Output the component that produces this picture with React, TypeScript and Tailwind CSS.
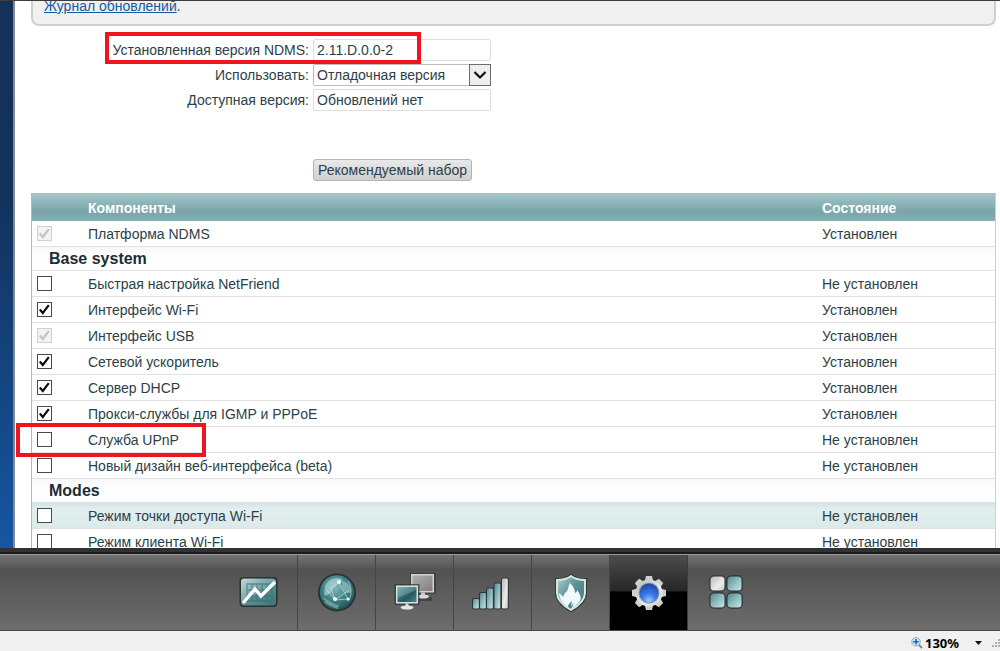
import {useState, type ReactNode} from 'react'

interface Component {
    id: string
    name: string
    installed: boolean
    locked?: boolean
    active?: boolean
    marked?: boolean
}

interface Group {
    title: string | null
    items: Component[]
}

const groups: Group[] = [
    {
        title: null,
        items: [{id: 'ndms', name: 'Платформа NDMS', installed: true, locked: true}],
    },
    {
        title: 'Base system',
        items: [
            {id: 'netfriend', name: 'Быстрая настройка NetFriend', installed: false},
            {id: 'wifi', name: 'Интерфейс Wi-Fi', installed: true},
            {id: 'usb', name: 'Интерфейс USB', installed: true, locked: true},
            {id: 'fastnat', name: 'Сетевой ускоритель', installed: true},
            {id: 'dhcp', name: 'Сервер DHCP', installed: true},
            {id: 'proxy', name: 'Прокси-службы для IGMP и PPPoE', installed: true},
            {id: 'upnp', name: 'Служба UPnP', installed: false, marked: true},
            {id: 'newui', name: 'Новый дизайн веб-интерфейса (beta)', installed: false},
        ],
    },
    {
        title: 'Modes',
        items: [
            {id: 'ap', name: 'Режим точки доступа Wi-Fi', installed: false, active: true},
            {id: 'client', name: 'Режим клиента Wi-Fi', installed: false},
        ],
    },
]

function Checkbox({item, checked, onChange}: {item: Component; checked: boolean; onChange: () => void}) {
    return (
        <span className="relative block size-[15px]">
            <input
                id={item.id}
                type="checkbox"
                checked={checked}
                disabled={item.locked}
                onChange={onChange}
                className="block size-[15px] appearance-none border border-[#4a4a4a] bg-white disabled:border-[#d0d0d0] disabled:bg-[#f3f3f3]"
            />
            {checked && (
                <svg viewBox="0 0 15 15" className="pointer-events-none absolute inset-0 size-[15px]">
                    <path
                        d="M2.8 7.6 5.8 11 11.8 3.2"
                        fill="none"
                        stroke={item.locked ? '#c3c3c3' : '#0c0c0c'}
                        strokeWidth="2.2"
                    />
                </svg>
            )}
        </span>
    )
}

function Field({id, label, children}: {id: string; label: string; children: ReactNode}) {
    return (
        <div className="relative flex h-[22px] items-center gap-1">
            <label htmlFor={id} className="w-[278px] text-right">{label}</label>
            {children}
        </div>
    )
}

function ComponentsTable() {
    const [selected, setSelected] = useState<Record<string, boolean>>(
        Object.fromEntries(groups.flatMap((g) => g.items).map((i) => [i.id, i.installed])),
    )

    const toggle = (id: string) => setSelected((prev) => ({...prev, [id]: !prev[id]}))

    return (
        <table className="w-full table-fixed border-separate border-spacing-0 border-x border-t border-[#b4b8b9] border-r-[#cfcfcf] text-left">
            <colgroup>
                <col className="w-14"/>
                <col/>
                <col className="w-[173px]"/>
            </colgroup>
            <thead>
            <tr className="h-[27px] bg-linear-to-b from-[#a0c8cb] via-[#7ba4a8] via-65% to-[#88b0b4] text-white">
                <td/>
                <th>Компоненты</th>
                <th>Состояние</th>
            </tr>
            </thead>
            {groups.map((group) => (
                <tbody key={group.title ?? 'root'}>
                {group.title && (
                    <tr className="h-6">
                        <th colSpan={3} className="border-b border-[#e2e2e2] bg-linear-to-b from-[#f8f8f8] via-white to-white pl-[17px] text-base leading-5 text-[#1c2d36]">
                            {group.title}
                        </th>
                    </tr>
                )}
                {group.items.map((item) => (
                    <tr
                        key={item.id}
                        className={item.active ? 'h-[26px] bg-linear-to-b from-[#d3e3e3] via-[#e1efef] via-25% to-[#dbe9e9]' : 'h-[26px]'}
                    >
                        <td className="relative border-b border-[#e2e2e2] pl-[5px]">
                            <Checkbox item={item} checked={selected[item.id]} onChange={() => toggle(item.id)}/>
                            {item.marked && (
                                <span className="pointer-events-none absolute -top-1 -left-4 z-10 h-[34px] w-[190px] border-4 border-[#f0141e]"/>
                            )}
                        </td>
                        <td className="border-b border-[#e2e2e2]"><label htmlFor={item.id}>{item.name}</label></td>
                        <td className="border-b border-[#e2e2e2]">{item.installed ? 'Установлен' : 'Не установлен'}</td>
                    </tr>
                ))}
                </tbody>
            ))}
        </table>
    )
}

function MonitorIcon() {
    return (
        <svg viewBox="0 0 44 44" className="size-11">
            <rect x="2.5" y="6" width="38" height="30" rx="4" fill="#2b3131"/>
            <rect x="4" y="7.5" width="35" height="27" rx="3" fill="url(#teal)"/>
            <path d="M4 11a3 3 0 0 1 3-3h29a3 3 0 0 1 3 3v3L4 30z" fill="#fff" opacity=".18"/>
            <path d="M10 13h25v17H10zM15 13v17M20 13v17M25 13v17M30 13v17M10 19h25M10 25h25" fill="none" stroke="#356a6e" strokeWidth="1.3" opacity=".55"/>
            <path d="M6 32 18 18l6 7 14-14" fill="none" stroke="#fff" strokeWidth="3.4"/>
        </svg>
    )
}

function GlobeIcon() {
    return (
        <svg viewBox="0 0 44 44" className="size-11">
            <circle cx="22" cy="21.5" r="19" fill="#2b3131"/>
            <circle cx="22" cy="21.5" r="17.2" fill="url(#globe)"/>
            <path d="M10 15c3-6 8-8 14-8 5 1 3 4 0 5-4 2-6 5-8 9-2 3-5 4-7 3z" fill="#b5dedd" opacity=".6"/>
            <path d="M27 10c6 1 9 5 9 11-3 3-6 0-8-3z" fill="#a5d3d3" opacity=".5"/>
            <path d="M8 27c5 3 8 7 16 8M10 31c5 3 8 5 13 6" fill="none" stroke="#8bc0c1" strokeWidth="2" opacity=".6"/>
            <path d="m24 12-8 5 4 12 13-1-9-16M12 19l8 10M20 29l14-10M33 10c4 6 4 16 0 20" fill="none" stroke="#d7f3f2" strokeWidth="1" opacity=".6"/>
            <circle cx="24" cy="11" r="2" fill="#effffe"/>
            <circle cx="20" cy="28" r="2" fill="#effffe"/>
            <circle cx="33" cy="28" r="1.5" fill="#effffe"/>
        </svg>
    )
}

function ComputersIcon() {
    return (
        <svg viewBox="0 0 44 44" className="size-11">
            <path d="M17 2h26v21H34v3h5v4H26v-4H17z" fill="#333" opacity=".6"/>
            <rect x="18" y="3" width="23" height="18.500" fill="#d2d2d2"/>
            <rect x="19.500" y="4.500" width="20" height="15.500" fill="url(#gray)"/>
            <path d="M28 21.500h4v3h-4z" fill="#c4c4c4"/>
            <ellipse cx="30" cy="25.500" rx="6" ry="2" fill="#dadada"/>
            <rect x="1.500" y="13" width="25" height="21" fill="#333" opacity=".7"/>
            <rect x="3" y="14.500" width="22" height="18" fill="#d5e4e4"/>
            <rect x="4.500" y="16" width="19" height="15" fill="url(#screen)"/>
            <path d="M4.500 16h19v3l-19 8z" fill="#fff" opacity=".2"/>
            <path d="M12.500 32.500h3v3h-3z" fill="#d8dede"/>
            <ellipse cx="14" cy="36.500" rx="6.500" ry="2" fill="#e1e6e6"/>
        </svg>
    )
}

function SignalIcon() {
    const bars = [
        {x: 2, y: 28},
        {x: 9, y: 22},
        {x: 16, y: 17.5},
        {x: 23.5, y: 12.5},
        {x: 31, y: 7.5},
    ]
    return (
        <svg viewBox="0 0 44 44" className="size-11">
            {bars.map((bar, i) => (
                <rect
                    key={bar.x}
                    x={bar.x}
                    y={bar.y}
                    width="5.8"
                    height={37.5 - bar.y}
                    rx="1"
                    fill={i === 4 ? 'url(#silver)' : 'url(#bar)'}
                    stroke="#2d3434"
                    strokeWidth="2"
                    paintOrder="stroke"
                />
            ))}
        </svg>
    )
}

function ShieldIcon() {
    return (
        <svg viewBox="0 0 44 44" className="size-11">
            <path
                d="M22 5c-4 3-9 4-14 4v13c0 8 7 13 14 17 7-4 14-9 14-17V9c-5 0-10-1-14-4z"
                fill="none"
                stroke="#303636"
                strokeWidth="4"
            />
            <path
                d="M22 5c-4 3-9 4-14 4v13c0 8 7 13 14 17 7-4 14-9 14-17V9c-5 0-10-1-14-4z"
                fill="url(#teal)"
                stroke="#d8e6e6"
                strokeWidth="2"
            />
            <path
                d="M19 36c-6-4-9-9-9-14 2 1 3 3 4 4 1-3 2-4 4-6 2-3 1-6 3-8 3 3 5 6 5 10 1-1 2-1 2-3 3 4 5 8 3 11-3 4-5 5-9 8l3-6-3 3 1-5c-2 2-4 3-4 6z"
                fill="#f1fafa"
            />
        </svg>
    )
}

function GearIcon() {
    return (
        <svg viewBox="0 0 44 44" className="size-11">
            {[0, 45, 90, 135, 180, 225, 270, 315].map((angle) => (
                <path key={angle} d="M17.8 10 19 5h6l1.200 5z" fill="#cfcfcf" transform={`rotate(${angle} 22 22)`}/>
            ))}
            <circle cx="22" cy="22" r="13.5" fill="url(#silver)"/>
            <circle cx="22" cy="22" r="10.5" fill="#8d949e"/>
            <circle cx="22" cy="22" r="9.5" fill="url(#blue)"/>
        </svg>
    )
}

function TilesIcon() {
    return (
        <svg viewBox="0 0 44 44" className="size-11" stroke="#2d3434" strokeWidth="2.500" paintOrder="stroke">
            <rect x="5.500" y="5.500" width="14" height="14" rx="3.500" fill="url(#silver)"/>
            <rect x="22.500" y="5.500" width="14" height="14" rx="3.500" fill="url(#bar)"/>
            <rect x="5.500" y="22.500" width="14" height="14" rx="3.500" fill="url(#bar)"/>
            <rect x="22.500" y="22.500" width="14" height="14" rx="3.500" fill="url(#bar)"/>
        </svg>
    )
}

function Gradients() {
    return (
        <svg className="absolute size-0" aria-hidden="true">
            <defs>
                <linearGradient id="teal" x1="0" y1="0" x2="1" y2="1">
                    <stop offset="0" stopColor="#b5d2d4"/>
                    <stop offset=".45" stopColor="#5b9295"/>
                    <stop offset="1" stopColor="#3d7679"/>
                </linearGradient>
                <linearGradient id="screen" x1="0" y1="0" x2="1" y2="1">
                    <stop offset="0" stopColor="#5f9a9e"/>
                    <stop offset=".6" stopColor="#225a5f"/>
                    <stop offset="1" stopColor="#4d8589"/>
                </linearGradient>
                <linearGradient id="gray" x1="0" y1="0" x2="1" y2="1">
                    <stop offset="0" stopColor="#b0b0b0"/>
                    <stop offset="1" stopColor="#808080"/>
                </linearGradient>
                <linearGradient id="silver" x1="0" y1="0" x2="1" y2="1">
                    <stop offset="0" stopColor="#b8b8b8"/>
                    <stop offset=".6" stopColor="#ececec"/>
                    <stop offset="1" stopColor="#c9c9c9"/>
                </linearGradient>
                <linearGradient id="bar" x1="0" y1="0" x2="1" y2="1">
                    <stop offset="0" stopColor="#4f8c91"/>
                    <stop offset=".5" stopColor="#8fbcbf"/>
                    <stop offset="1" stopColor="#cbe5e6"/>
                </linearGradient>
                <radialGradient id="globe" cx=".45" cy=".35" r=".65">
                    <stop offset="0" stopColor="#86b9bb"/>
                    <stop offset=".6" stopColor="#3f7f83"/>
                    <stop offset="1" stopColor="#245256"/>
                </radialGradient>
                <radialGradient id="blue" cx=".5" cy=".9" r=".9">
                    <stop offset="0" stopColor="#9cc8ff"/>
                    <stop offset=".4" stopColor="#3a7be6"/>
                    <stop offset="1" stopColor="#1b46a8"/>
                </radialGradient>
            </defs>
        </svg>
    )
}

const tabs = [
    {label: 'Системный монитор', icon: <MonitorIcon/>},
    {label: 'Интернет', icon: <GlobeIcon/>},
    {label: 'Домашняя сеть', icon: <ComputersIcon/>},
    {label: 'Сеть Wi-Fi', icon: <SignalIcon/>},
    {label: 'Безопасность', icon: <ShieldIcon/>},
    {label: 'Система', icon: <GearIcon/>},
    {label: 'Приложения', icon: <TilesIcon/>},
]

export default function App() {
    const [tab, setTab] = useState(5)
    const [channel, setChannel] = useState('debug')

    return (
        <div className="flex h-screen flex-col overflow-hidden bg-white font-['Liberation_Sans',Arial,sans-serif] text-sm text-[#2b3f49]">
            <Gradients/>
            <div className="flex min-h-0 flex-1 overflow-hidden border-t border-[#3f3c40]">
                <div className="w-[15px] shrink-0 border-r-2 border-[#83888f] bg-linear-to-b from-[#143159] via-[#12325c] via-35% to-[#1556a3]"/>
                <main className="min-w-0 flex-1 pr-1 pl-4">
                    <div className="h-[25px] rounded-b-lg border-2 border-t-0 border-[#cfcfcf] bg-[#f0f0f0] pl-[11px]">
                        <p className="leading-[10px]"><a href="#log" className="text-[#145a9e] underline">Журнал обновлений</a>.</p>
                    </div>

                    <div className="mt-[13px] flex flex-col gap-[3px]">
                        <Field id="version" label="Установленная версия NDMS:">
                            <input
                                id="version"
                                readOnly
                                value="2.11.D.0.0-2"
                                className="h-[22px] w-[178px] rounded-xs border border-[#dedede] px-[3px]"
                            />
                            <span className="pointer-events-none absolute top-[-7px] left-[74px] h-8 w-[316px] border-4 border-[#f0141e]"/>
                        </Field>
                        <Field id="channel" label="Использовать:">
                            <span className="relative">
                                <select
                                    id="channel"
                                    value={channel}
                                    onChange={(e) => setChannel(e.target.value)}
                                    className="block h-[22px] w-[178px] appearance-none rounded-xs border border-[#bdbdbd] bg-white px-[3px]"
                                >
                                    <option value="debug">Отладочная версия</option>
                                </select>
                                <span className="pointer-events-none absolute inset-y-0 right-0 flex w-[22px] items-center justify-center border border-[#6b6b6b] bg-[#eeeeee]">
                                    <svg viewBox="0 0 14 10" className="h-2.5 w-3.5">
                                        <path d="m1.5 2 5.5 5.5L12.5 2" fill="none" stroke="#111" strokeWidth="2.2"/>
                                    </svg>
                                </span>
                            </span>
                        </Field>
                        <Field id="available" label="Доступная версия:">
                            <input
                                id="available"
                                readOnly
                                value="Обновлений нет"
                                className="h-[22px] w-[178px] rounded-xs border border-[#dedede] px-[3px]"
                            />
                        </Field>
                    </div>

                    <button className="mt-12 mb-3 ml-[282px] block h-[22px] w-[159px] rounded-[3px] border border-[#b5b5b5] bg-linear-to-b from-[#e9e9e9] to-[#cfcfcf] whitespace-nowrap">
                        Рекомендуемый набор
                    </button>

                    <ComponentsTable/>
                </main>
            </div>

            <div className="z-20 h-1.5 shrink-0 border-b-2 border-[#1a1a1b] bg-[#323234]"/>
            <nav className="z-20 flex h-[77px] shrink-0 border-t border-b border-t-[#9a9a9a] border-b-[#4a4a4a] bg-linear-to-b from-[#747474] via-[#525252] via-20% to-[#6d6d6d] pl-[22%]">
                {tabs.map((t, i) => (
                    <button
                        key={t.label}
                        aria-label={t.label}
                        onClick={() => setTab(i)}
                        className={
                            i === tab
                                ? 'flex w-[78px] items-center justify-center border-r border-[#3d3d3d] bg-linear-to-b from-[#4d4d4d] from-0% via-[#272727] via-48% to-black to-50%'
                                : 'flex w-[78px] items-center justify-center border-r border-[#454545] last:border-r-0'
                        }
                    >
                        {t.icon}
                    </button>
                ))}
            </nav>
            <footer className="flex h-5 shrink-0 items-center justify-end bg-[#f0f0f0] pt-1 font-['Noto_Sans',sans-serif] text-[13px] leading-4 font-bold text-black">
                <svg viewBox="0 0 12 12" className="mr-0.5 size-3">
                    <path d="m7.5 7.5 3.500 3.500" stroke="#b08050" strokeWidth="2"/>
                    <circle cx="5" cy="4.8" r="4.2" fill="#d5e9fb" stroke="#8aa5c0"/>
                    <path d="M5 2v5.600M2.200 4.800h5.600" stroke="#1565c8" strokeWidth="1.6"/>
                </svg>
                <span>130%</span>
                <svg viewBox="0 0 7 4" className="ml-4 h-1 w-[7px]">
                    <path d="M0 0h7L3.500 4z" fill="#111"/>
                </svg>
                <svg viewBox="0 0 8 8" className="ml-2.5 size-2" fill="#b0b0b0">
                    <path d="M6 0h2v2H6zM3 3h2v2H3zM6 3h2v2H6zM0 6h2v2H0zM3 6h2v2H3zM6 6h2v2H6z"/>
                </svg>
            </footer>
        </div>
    )
}
